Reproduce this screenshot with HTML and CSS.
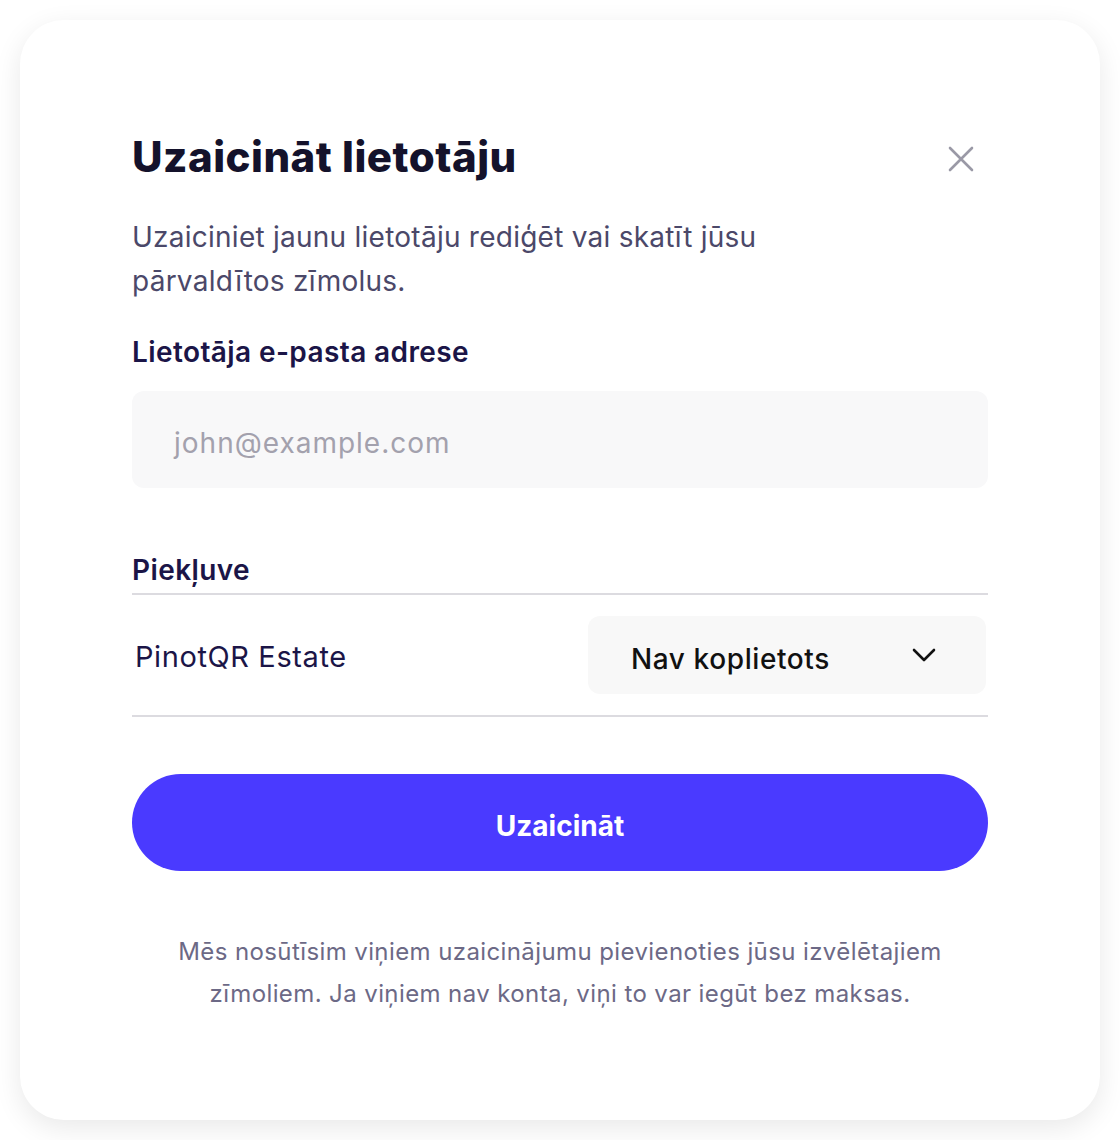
FILE: index.html
```html
<!DOCTYPE html>
<html lang="lv">
<head>
<meta charset="utf-8">
<title>Uzaicināt lietotāju</title>
<link rel="stylesheet" href="styles.css">
</head>
<body>
<div class="card">
  <div class="header">
    <h1 class="title">Uzaicināt lietotāju</h1>
    <button class="close" aria-label="Aizvērt">
      <svg width="28" height="28" viewBox="0 0 28 28"><path d="M3 3 L25 25 M25 3 L3 25" stroke="#9a99a6" stroke-width="2.6" stroke-linecap="round" fill="none"/></svg>
    </button>
  </div>
  <p class="subtitle">Uzaiciniet jaunu lietotāju rediģēt vai skatīt jūsu pārvaldītos zīmolus.</p>
  <label class="label">Lietotāja e-pasta adrese</label>
  <div class="input">john@example.com</div>
  <div class="label access">Piekļuve</div>
  <div class="row">
    <span class="brand">PinotQR Estate</span>
    <div class="select">
      <span class="select-text">Nav koplietots</span>
      <svg width="24" height="14" viewBox="0 0 24 14"><path d="M2 2 L12 12 L22 2" stroke="#111" stroke-width="2.6" stroke-linecap="round" stroke-linejoin="round" fill="none"/></svg>
    </div>
  </div>
  <button class="submit">Uzaicināt</button>
  <p class="note">Mēs nosūtīsim viņiem uzaicinājumu pievienoties jūsu izvēlētajiem zīmoliem. Ja viņiem nav konta, viņi to var iegūt bez maksas.</p>
</div>
</body>
</html>
```
FILE: styles.css
```css
html, body { margin: 0; padding: 0; background: #ffffff; }
body { font-family: Inter, "Noto Sans", sans-serif; padding: 20px; }
.card {
  box-sizing: border-box;
  width: 1080px;
  height: 1100px;
  background: #fff;
  border-radius: 44px;
  box-shadow: 0 8px 28px rgba(0,0,0,0.09);
  padding: 109px 112px 0 112px;
}
.header { display: flex; justify-content: space-between; align-items: center; }
.title { margin: 0; font-size: 42px; font-weight: 800; color: #14122b; letter-spacing: 0.5px; line-height: 56px; }
.close { background: none; border: 0; padding: 0; margin-right: 13px; margin-top: 3px; width: 28px; height: 28px; display: flex; }
.subtitle { margin: 30px 0 0; font-size: 28px; line-height: 44px; color: #4b4869; font-weight: 400; max-width: 660px; letter-spacing: 0.25px; }
.label { display: block; margin-top: 29px; font-size: 28px; font-weight: 600; color: #1b1547; line-height: 40px; letter-spacing: 0.4px; }
.input {
  margin-top: 19px; height: 97px; box-sizing: border-box; background: #f8f8f9; border-radius: 12px;
  padding: 6px 0 0 42px; display: flex; align-items: center; font-size: 28px; color: #a3a1ad; letter-spacing: 1px;
}
.access { margin-top: 62px; padding-bottom: 3px; border-bottom: 2px solid #dcdbe0; }
.row { display: flex; justify-content: space-between; align-items: center; padding: 21px 2px 21px 3px; border-bottom: 2px solid #dcdbe0; }
.brand { font-size: 29px; color: #1b1547; letter-spacing: 0.6px; padding-top: 3px; }
.select {
  width: 398px; height: 78px; box-sizing: border-box; background: #f8f8f8; border-radius: 12px;
  display: flex; align-items: center; justify-content: space-between; padding: 0 50px 0 43px;
  font-size: 28px; font-weight: 500; color: #111; letter-spacing: 0.6px;
}
.select-text { padding-top: 7px; }
.submit {
  display: block; width: 100%; margin-top: 57px; height: 97px; border: 0; border-radius: 49px;
  padding: 6px 0 0; background: #4a3aff; color: #fff; font-family: inherit; font-size: 28px; font-weight: 700; letter-spacing: 0;
}
.note { margin: 60px 0 0; text-align: center; font-size: 24px; line-height: 42px; color: #6c6986; padding: 0 36px; letter-spacing: 0.4px; }
```
